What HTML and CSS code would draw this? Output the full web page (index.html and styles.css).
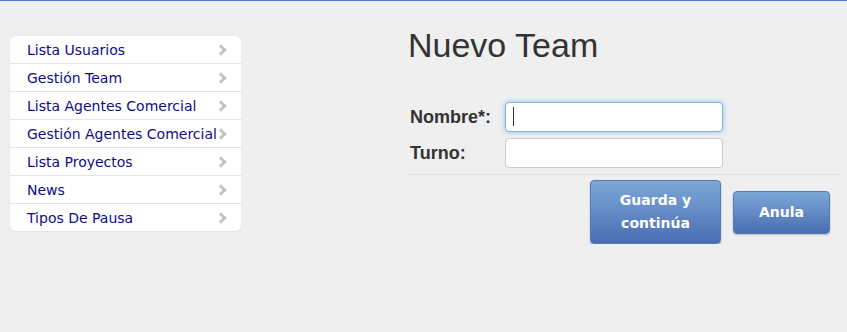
FILE: index.html
```html
<!DOCTYPE html>
<html lang="es">
<head>
    <meta charset="UTF-8">
    <meta name="viewport" content="width=device-width, initial-scale=1.0">
    <title>Nuevo Team</title>
    <link rel="stylesheet" href="styles.css">
</head>
<body>
    <div class="topline"></div>

    <div class="page">
        <!-- Menu lateral -->
        <ul class="side-menu">
            <li><a href="#">Lista Usuarios</a></li>
            <li><a href="#">Gestión Team</a></li>
            <li><a href="#">Lista Agentes Comercial</a></li>
            <li><a href="#">Gestión Agentes Comercial</a></li>
            <li><a href="#">Lista Proyectos</a></li>
            <li><a href="#">News</a></li>
            <li><a href="#">Tipos De Pausa</a></li>
        </ul>

        <!-- Formulario -->
        <div class="main">
            <h1>Nuevo Team</h1>
            <form class="team-form">
                <div class="form-row">
                    <label for="nombre">Nombre*:</label>
                    <span class="field">
                        <input type="text" id="nombre" class="focused">
                        <span class="caret"></span>
                    </span>
                </div>
                <div class="form-row">
                    <label for="turno">Turno:</label>
                    <span class="field">
                        <input type="text" id="turno">
                    </span>
                </div>
                <div class="actions">
                    <button type="submit" class="btn btn-big">Guarda y<br>continúa</button>
                    <button type="button" class="btn">Anula</button>
                </div>
            </form>
        </div>
    </div>
</body>
</html>
```

FILE: styles.css
```css
body {
    margin: 0;
    padding: 0;
    background-color: #efefef;
    font-family: "DejaVu Sans", Verdana, sans-serif;
    color: #333;
}
.topline {
    height: 1px;
    background-color: #4a78c2;
}
.page {
    display: flex;
    align-items: flex-start;
}
.side-menu {
    list-style: none;
    margin: 35px 0 0 10px;
    padding: 0;
    width: 231px;
    background-color: #fff;
    border-radius: 6px;
    box-shadow: 0 1px 2px rgba(0, 0, 0, 0.06);
}
.side-menu li {
    height: 27px;
    border-bottom: 1px solid #e4e4e4;
}
.side-menu li:last-child {
    border-bottom: none;
}
.side-menu a {
    display: block;
    position: relative;
    padding-left: 17px;
    padding-top: 1px;
    line-height: 27px;
    font-size: 14px;
    color: #0c0c8a;
    text-decoration: none;
    white-space: nowrap;
}
.side-menu a::after {
    content: "";
    position: absolute;
    right: 16px;
    top: 10px;
    width: 5px;
    height: 5px;
    border-top: 3px solid #c4c4c4;
    border-right: 3px solid #c4c4c4;
    transform: rotate(45deg);
}
.main {
    margin-left: 167px;
    width: 432px;
}
.main h1 {
    margin: 25px 0 0;
    padding-bottom: 0;
    font-family: "Liberation Sans", Arial, sans-serif;
    font-weight: normal;
    font-size: 34px;
    line-height: 38px;
    color: #333;
    border-bottom: 1px solid #ececec;
}
.team-form {
    margin-top: 37px;
}
.form-row {
    display: flex;
    align-items: center;
    padding-left: 2px;
    margin-bottom: 6px;
}
.form-row label {
    width: 95px;
    font-family: "Liberation Sans", Arial, sans-serif;
    font-weight: bold;
    font-size: 18px;
    color: #333;
}
.field {
    position: relative;
    display: block;
}
.field input {
    display: block;
    box-sizing: border-box;
    width: 218px;
    height: 30px;
    margin: 0;
    border: 1px solid #ccc;
    border-radius: 4px;
    background-color: #fff;
    outline: none;
}
.field input.focused {
    border-color: #80b3e8;
    box-shadow: 0 0 5px rgba(82, 158, 236, 0.6);
}
.caret {
    position: absolute;
    left: 8px;
    top: 5px;
    width: 1px;
    height: 19px;
    background-color: #333;
}
.actions {
    display: flex;
    justify-content: flex-end;
    align-items: center;
    gap: 12px;
    padding: 5px 10px 0 0;
    border-top: 1px solid #dedede;
}
.btn {
    box-sizing: border-box;
    width: 97px;
    height: 43px;
    padding: 0;
    border: 1px solid #5479b8;
    border-radius: 4px;
    background: linear-gradient(to bottom, #7ca8d8, #4a6db2);
    box-shadow: 0 1px 2px rgba(0, 0, 0, 0.25);
    color: #fff;
    font-family: "DejaVu Sans", Verdana, sans-serif;
    font-weight: bold;
    font-size: 14px;
    line-height: 23px;
    cursor: pointer;
}
.btn-big {
    width: 131px;
    height: 64px;
}
```
